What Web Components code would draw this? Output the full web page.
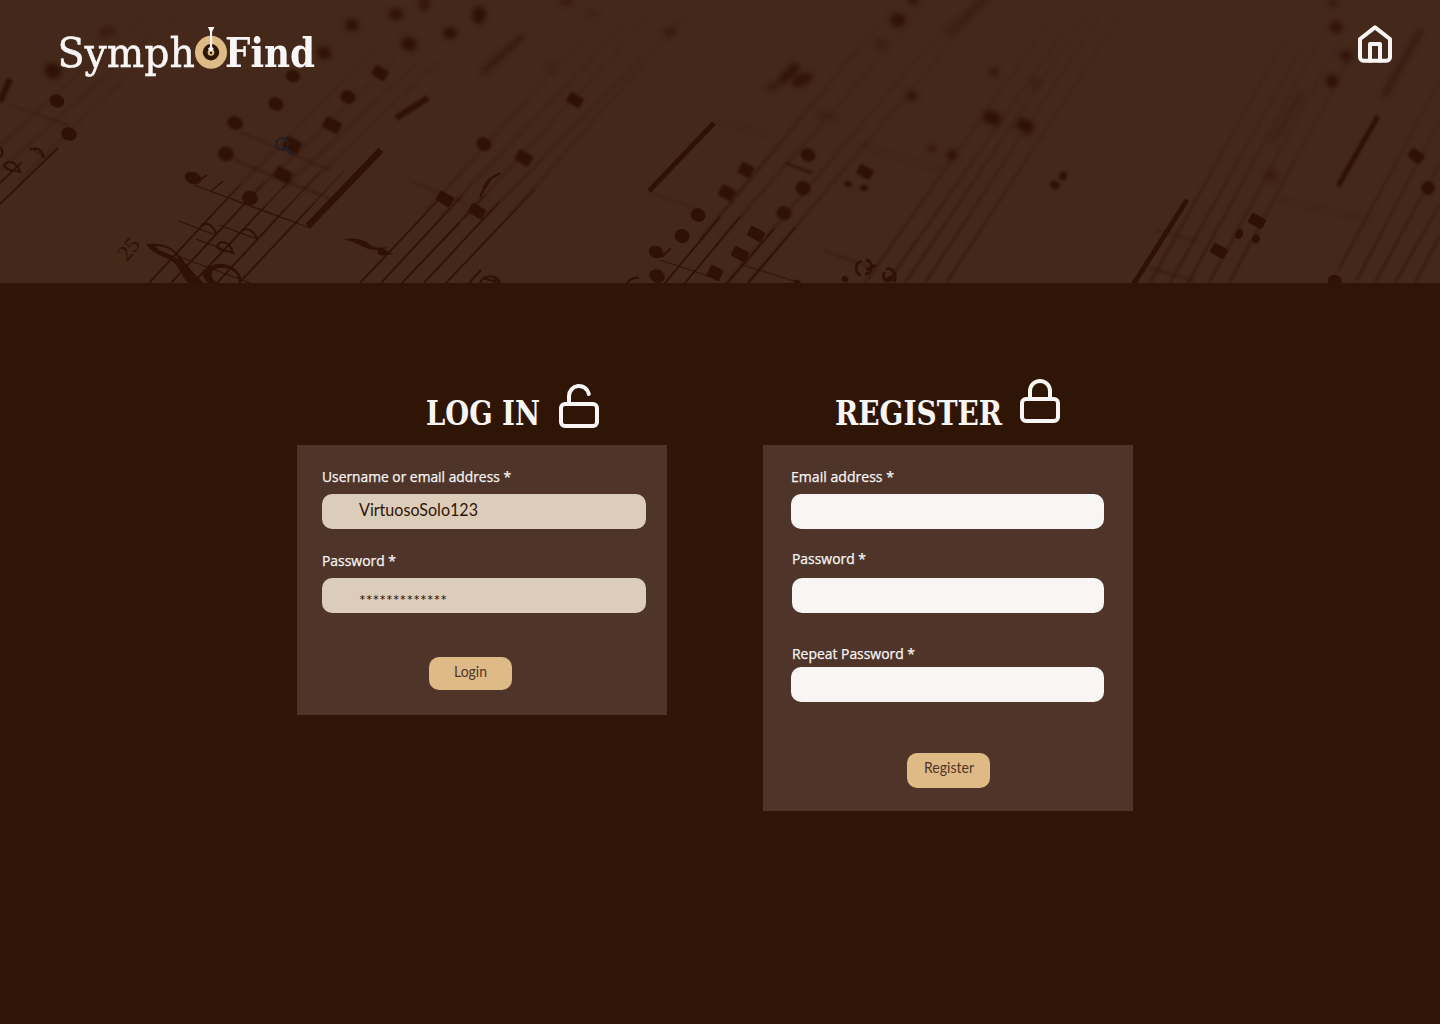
<!DOCTYPE html>
<html lang="en">
<head>
<meta charset="utf-8">
<title>SymphoFind</title>
<style>
html,body{margin:0;height:100%;background:#2f1505}
body{font-family:Lato,sans-serif;color:#f8f6f5;overflow:hidden}
</style>
</head>
<body>
<sympho-page></sympho-page>
<script>
const define = (name, render) => customElements.define(name, class extends HTMLElement {
  connectedCallback() {
    if (this.shadowRoot) return;
    this.attachShadow({ mode: 'open' }).innerHTML = render(this);
  }
});
const at = (el, name, fallback = '') => el.getAttribute(name) ?? fallback;

// One line of text fitted to an exact width.
define('fit-text', el => `
<style>:host{display:block;width:${at(el,'width')}px;height:${at(el,'height')}px}
svg{display:block;width:100%;height:100%;overflow:visible}
text{font-family:${at(el,'font',"'Open Sans',sans-serif")};font-size:${at(el,'size')}px;font-weight:${at(el,'weight','400')};fill:currentColor;stroke:currentColor;stroke-width:${at(el,'bold','0')}px}</style>
<svg><text x="0" y="${at(el,'base')}" textLength="${at(el,'width')}" lengthAdjust="spacingAndGlyphs">${at(el,'text')}</text></svg>`);

const icons = {
  home: ['<path d="M3 9l9-7 9 7v11a2 2 0 0 1-2 2H5a2 2 0 0 1-2-2z"/><path d="M9 22V12h6v10"/>', 40, 2.4],
  unlock: ['<rect x="3" y="11" width="18" height="11" rx="2"/><path d="M7 11V7a5 5 0 0 1 9.9-1"/>', 48, 2],
  lock: ['<rect x="3" y="11" width="18" height="11" rx="2"/><path d="M7 11V7a5 5 0 0 1 10 0v4"/>', 48, 2]
};
define('line-icon', el => {
  const [shape, size, stroke] = icons[at(el, 'name')];
  return `<style>:host{display:block;width:${size}px;height:${size}px}svg{display:block}</style>
<svg width="${size}" height="${size}" viewBox="0 0 24 24" fill="none" stroke="#f8f6f5" stroke-width="${stroke}" stroke-linecap="round" stroke-linejoin="round">${shape}</svg>`;
});

define('brand-logo', () => `
<style>:host{display:block;width:256px;height:54px}svg{display:block;overflow:visible}
text{font-family:'DejaVu Serif Condensed','DejaVu Serif',serif;font-size:41.5px;fill:#f8f6f5}</style>
<svg width="256" height="54" viewBox="60 26 256 54">
<text x="57.500" y="67" textLength="137.5" lengthAdjust="spacingAndGlyphs" stroke="#f8f6f5" stroke-width=".45">Symph</text>
<ellipse cx="211" cy="52.3" rx="16" ry="16.5" fill="#deba86"/>
<circle cx="211" cy="52.3" r="8.2" fill="#2f1505"/>
<circle cx="211" cy="52.5" r="3.3" fill="#deba86"/>
<path d="M208 27h6.4l-2.300 4.700V47l1.600 1.400-1.700 3h-2.200l-1.800-3 2-1.400V31.700z" fill="#f8f6f5"/>
<circle cx="211" cy="52.800" r="1.200" fill="#2f1505"/>
<text x="225" y="67" font-weight="700" textLength="90" lengthAdjust="spacingAndGlyphs">Find</text>
</svg>`);

// Oval note heads: x, y, half width, half height, angle, opacity
const heads = (list) => list.map(([x, y, rx = 7.5, ry = 6, a = 20, o = 1]) =>
  `<ellipse cx="${x}" cy="${y}" rx="${rx}" ry="${ry}" transform="rotate(${a} ${x} ${y})" opacity="${o}"/>`).join('');
// Square note heads lying across a staff line
const blocks = (list) => list.map(([x, y, w = 16, h = 11, a = 28, o = 1]) =>
  `<rect x="${x - w / 2}" y="${y - h / 2}" width="${w}" height="${h}" rx="2" transform="rotate(${a} ${x} ${y})" opacity="${o}"/>`).join('');
// Straight strokes: x1, y1, x2, y2, width, opacity
const strokes = (list) => list.map(([a, b, c, d, w = 1.2, o = 1]) =>
  `<path d="M${a} ${b}L${c} ${d}" fill="none" stroke="#2f1204" stroke-width="${w}" opacity="${o}"/>`).join('');
// Staff lines that fade out towards their far end
const lines = (list, w, paint) => list.map(([a, b, c, d]) =>
  `<path d="M${a} ${b}L${c} ${d}" fill="none" stroke="url(#${paint})" stroke-width="${w}"/>`).join('');

define('sheet-music', () => `
<style>:host{display:block;width:100%;height:100%}svg{display:block}filter{color-interpolation-filters:sRGB}</style>
<svg width="1440" height="283" viewBox="0 0 1440 283" fill="#2f1204">
<defs>
<linearGradient id="fade" gradientUnits="userSpaceOnUse" x1="0" y1="283" x2="0" y2="0"><stop offset="0" stop-color="#2f1204"/><stop offset=".22" stop-color="#2f1204" stop-opacity=".85"/><stop offset=".36" stop-color="#2f1204" stop-opacity=".4"/><stop offset=".5" stop-color="#2f1204" stop-opacity=".2"/><stop offset="1" stop-color="#2f1204" stop-opacity=".02"/></linearGradient>
<linearGradient id="soft" gradientUnits="userSpaceOnUse" x1="0" y1="283" x2="0" y2="0"><stop offset="0" stop-color="#2f1204" stop-opacity=".6"/><stop offset=".3" stop-color="#2f1204" stop-opacity=".36"/><stop offset=".6" stop-color="#2f1204" stop-opacity=".15"/><stop offset="1" stop-color="#2f1204" stop-opacity=".02"/></linearGradient>
<filter id="b1" x="0" y="0" width="1440" height="283" filterUnits="userSpaceOnUse"><feGaussianBlur stdDeviation=".7"/></filter>
<filter id="b2" x="0" y="0" width="1440" height="283" filterUnits="userSpaceOnUse"><feGaussianBlur stdDeviation="1.300"/></filter>
<filter id="b3" x="0" y="0" width="1440" height="283" filterUnits="userSpaceOnUse"><feGaussianBlur stdDeviation="2.400"/></filter>
</defs>
<g filter="url(#b2)">
${lines([[0,145,160,0],[0,170,180,10],[20,180,205,0],[228,197,380,45],[250,197,395,60],[282,189,420,60],[304,189,440,60],[425,212,600,20],[440,217,630,20],[465,217,650,15],[482,220,680,20],[510,215,700,0],[700,240,900,0],[720,240,930,0],[727,283,950,20],[748,283,970,20],[700,240,880,20],[865,283,1050,20],[887,283,1065,30],[905,283,1090,10],[925,283,1110,0],[946,283,1130,0],[1150,283,1290,30],[1170,283,1300,50],[1188,283,1325,30],[1209,283,1340,40],[1229,283,1360,40],[1339,269,1440,80],[1357,280,1440,120],[1375,283,1440,162],[1395,283,1440,204],[1415,283,1440,235]],2.400,'soft')}
</g>
<g filter="url(#b1)">${lines([[149,283,240,185],[171,283,265,182],[193,283,290,180],[217,283,320,172],[239,283,345,170],[360,283,445,193],[381,283,463,195],[402,283,485,195],[424,283,500,201],[446,283,535,189],[665,283,720,217],[685,283,740,217],[727,283,775,228],[748,283,795,228]],1.800,'fade')}</g>
<g>
${lines([[149,283,228,197],[171,283,250,197],[193,283,265,206],[217,283,285,209],[239,283,310,208],[360,283,426,213],[381,283,440,219],[402,283,460,223],[424,283,480,223],[446,283,500,226],[665,283,700,241],[685,283,720,241]],1.200,'fade')}
${strokes([[0,204,58,148,1.900,.85],[0,183,22,162,1.900,.85],[469,283,481,270,2],[194,185,310,228,1.300,.9],[179,221,215,235],[219,225,257,239],[196,239,233,253],[180,257,250,283,1],[211,191,223,181,1.500],[660,260,720,280,1],[740,264,800,283,1,.8],[28,146,45,158,1]])}
<path d="M146 244c14-2 25 2 33 11 9 11 15 20 25 28h-16c-7-7-8-16-16-22-9-5-18-6-26-17zm9 2c6 8 17 7 24 14-4-10-14-14-24-14z"/>
<path d="M203 273c5-12 30-14 38 4v6h-2c1-14-18-19-26-12-3 4-1 8 4 12h-9q-5-5-5-10z"/>
<path d="M201 226c6-5 13 0 15 8M241 231c6-5 14 1 16 8M217 247c3-9 13-5 16 6-5-3-13-1-16-6M4 166c3-8 13-4 16 6-7-2-12-1-16-6M30 150q9-5 14 7M0 147q5 5 0 10" fill="none" stroke="#2f1204" stroke-width="2.200"/>
<path d="M344 239c13-2 21 1 28 7q6 3 15 1l-3 2 9 5-7 1c-7 2-10-2-8-5-12 1-16-6-34-11z"/>
<path d="M480 283c3-8 15-9 20-1M483 278l17 5M493 276l4 5M627 283q4-6 12-5" fill="none" stroke="#2f1204" stroke-width="2.200"/>
<text transform="translate(127 262) rotate(-50)" font-family="'Liberation Serif',serif" font-size="22">25</text>
</g>
<g filter="url(#b1)">
${heads([[193,178,8.500,6],[250,198,8,7],[69,134,8,6.500],[57,101,7.500,6.500],[656,252,7.500,6,25],[657,276,8,6.500,25],[682,236,7.500,7],[698,215,7.500,6.500]])}
${blocks([[445,199],[477,211],[715,273,14,12],[756,234],[740,254],[1219,251],[1257,221]])}
${strokes([[308,226,381,150,6.500],[649,191,714,123,5],[1133,285,1187,200,5],[662,257,671,248,1.800],[198,181,207,175,1.800],[480,197,484,188,2],[484,188,490,179,3.500],[490,179,500,173,2.200]])}
<path d="M866 260c8 1 7 14-1 14M862 261c-8 2-7 13-1 14M866 270l10-5M884 272c-2 8 3 11 9 7M886 269c6-2 12 6 8 13M884 281l11-6" fill="none" stroke="#2f1204" stroke-width="2.800"/>
${heads([[845,279,3.500,3],[797,282,4,2],[1335,281,7,6],[1239,234,4,5],[1256,239,4,4.500]])}
</g>
<g filter="url(#b2)">
${heads([[226,154,8,7],[235,123,8,6.500],[276,104,7.500,6.500],[348,97,7.500,6.500],[784,213,7.500,7],[803,188,7.500,7],[808,155,7.500,6.500],[484,144,7.500,6.500],[1428,188,6.500,7],[293,76,7,6],[860,186,0,0],[864,188,3.500,3.500],[848,184,4,3],[1055,185,5,4],[1063,176,4,4.500]])}
${blocks([[283,175,17,12],[332,125,17,12],[292,145,17,13],[524,158,16,12,32],[575,100,15,11,32],[727,193,15,12],[746,170,14,12],[865,172,15,11],[1416,156,15,11,35],[380,73,15,11,32]])}
${strokes([[0,102,10,79,6],[396,118,428,98,6],[1338,186,1378,116,5],[785,163,812,173,3,.7],[8,105,68,125,1.500,.35],[240,132,330,170,1.500,.4],[234,160,330,199,1.500,.6],[410,181,465,203,1.500,.4],[1155,230,1200,242,1.500,.35],[1150,268,1195,281,1.500,.5],[650,193,700,210,1.500,.25],[825,251,870,267,1.500,.5]])}
</g>
<g filter="url(#b3)">
${heads([[53,71,9,7.500],[107,32,9,5,-20,.5],[324,53,7,6],[352,25,7,6],[409,44,8,7,20],[396,14,7,6,0,.9],[450,33,7,6,0],[479,15,7,9,0],[424,4,6,7,0,.7],[566,2,7,4,0,.5],[593,14,6,5,0,.2],[670,32,7,5,0,.5],[898,20,8,7,0,.9],[914,1,6,4,0,.8],[881,44,7,6,0,.3],[912,96,6,5,0,.75],[994,72,5,5,0,.6],[952,155,5,5,0,1],[932,149,6,4,0,.5],[1035,83,5,5,0,.3],[1333,3,6,4,0,.6],[1336,27,7,6,0,.8],[1346,56,6,6,0,.8],[1332,81,6,6.500,0,1],[1271,176,7,6,0,.4],[822,115,5,5,0,.3],[832,118,5,4,0,.25],[802,80,11,6,-25,.85],[550,68,6,5,0,.2]])}
${blocks([[992,118,17,12,22],[1025,126,17,12,30]])}
${strokes([[482,73,523,36,6,.6],[948,34,985,-2,9,.35],[768,89,783,81,6,.6],[782,80,798,65,9,.9],[1384,96,1421,30,6,.55],[1272,142,1302,93,5,.3],[1280,200,1370,220,3,.2],[860,145,940,170,3,.15],[720,121,770,136,3,.15]])}
</g>
<g fill="none" stroke="#202028" stroke-width="2"><circle cx="282" cy="144" r="5.900"/><path d="M286.500 148.500l6.500 6.500" stroke-width="2.500"/></g>
</svg>`);

define('site-header', () => `
<style>:host{display:grid;height:283px;background:#44281a;overflow:hidden}
sheet-music,.bar{grid-area:1/1}
.bar{display:flex;justify-content:space-between;align-items:flex-start;padding:24px 45px 0 60px;z-index:1}
brand-logo{margin-top:2px}</style>
<sheet-music></sheet-music><div class="bar"><brand-logo></brand-logo><line-icon name="home"></line-icon></div>`);

define('panel-title', el => `
<style>:host{display:flex;align-items:flex-start;box-sizing:border-box;height:162px;padding:${at(el,'top')}px 0 0 ${at(el,'left')}px}
line-icon{margin-left:${at(el,'gap')}px}fit-text{margin-top:${at(el,'drop')}px}</style>
<fit-text font="'DejaVu Serif Condensed','DejaVu Serif',serif" weight="700" size="32.800" height="34" base="29" width="${at(el,'width')}" text="${at(el,'text')}"></fit-text>
<line-icon name="${at(el,'icon')}"></line-icon>`);

define('form-field', el => `
<style>:host{display:block}
.box{height:35px;border-radius:10px;background:var(--field,#f8f6f5);color:#2f1505;box-sizing:border-box;padding-left:37px;margin-left:${at(el,'inset','0')}px}
fit-text{margin-left:${at(el,'shift','0')}px}</style>
<fit-text size="15" bold=".25" height="24" base="${at(el,'base','12')}" width="${at(el,'width')}" text="${at(el,'label')}"></fit-text>
<div class="box"><slot></slot></div>`);

define('gold-button', () => `
<style>:host{display:flex;justify-content:center;width:83px;background:#deba86;border-radius:10px;color:#4f3529}</style><slot></slot>`);

define('form-card', () => `
<style>:host{display:flex;flex-direction:column;box-sizing:border-box;width:370px;background:#4f3529}</style><slot></slot>`);

define('sympho-page', () => `
<style>:host{display:block;height:1024px;background:#2f1505}
main{display:flex;gap:96px;padding-left:297px;align-items:flex-start}
.login{height:270px;padding:25px 21px 0 25px;--field:#dccdba}
.register{height:365.500px;padding:25px 29px 0 28px}
.second{margin-top:25px}.third{margin-top:30px}
.login gold-button{height:33px;margin:44px 0 0 107px}
.register gold-button{height:35px;margin:51px 0 0 116px}</style>
<site-header></site-header>
<main>
<section><panel-title text="LOG IN" icon="unlock" width="114" left="129" top="99" gap="15" drop="14"></panel-title>
<form-card class="login">
<form-field label="Username or email address *" width="189"><fit-text font="Lato,sans-serif" size="16.500" width="119" height="35" base="22" text="VirtuosoSolo123"></fit-text></form-field>
<form-field class="second" label="Password *" width="74"><fit-text font="Lato,sans-serif" size="15" width="88" height="35" base="28" text="*************"></fit-text></form-field>
<gold-button><fit-text font="Lato,sans-serif" size="14.500" width="33" height="33" base="20" text="Login"></fit-text></gold-button>
</form-card></section>
<section><panel-title text="REGISTER" icon="lock" width="167" left="72" top="94" gap="14" drop="19"></panel-title>
<form-card class="register">
<form-field label="Email address *" width="103"></form-field>
<form-field class="second" label="Password *" width="74" base="10" inset="1" shift="1"></form-field>
<form-field class="third" label="Repeat Password *" width="123" base="16" shift="1"></form-field>
<gold-button><fit-text font="Lato,sans-serif" size="14.500" width="50" height="35" base="20" text="Register"></fit-text></gold-button>
</form-card></section>
</main>`);
</script>
</body>
</html>
